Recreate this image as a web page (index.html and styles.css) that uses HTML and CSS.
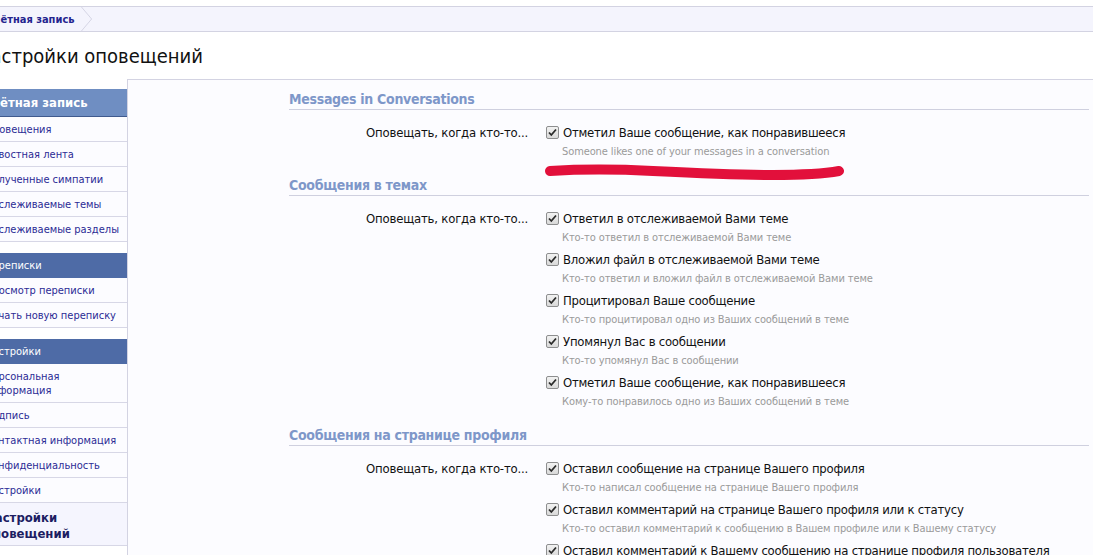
FILE: index.html
```html
<!DOCTYPE html>
<html lang="ru">
<head>
<meta charset="utf-8">
<title>Настройки оповещений</title>
<link rel="stylesheet" href="styles.css">
</head>
<body>
<div class="page">
  <nav class="breadcrumb">
    <a class="crumb" href="#">Учётная запись</a>
    <svg class="chev" width="14" height="26" viewBox="0 0 14 26"><path d="M1 0 L12 13 L1 26" fill="none" stroke="#d3d3e3" stroke-width="1"/></svg>
  </nav>
  <h1 class="title">Настройки оповещений</h1>
  <div class="layout">
    <aside class="sidebar">
      <div class="group">
        <div class="ghead ghead-first">Учётная запись</div>
        <a class="item" href="#">Оповещения</a>
        <a class="item" href="#">Новостная лента</a>
        <a class="item" href="#">Полученные симпатии</a>
        <a class="item" href="#">Отслеживаемые темы</a>
        <a class="item" href="#">Отслеживаемые разделы</a>
      </div>
      <div class="group">
        <div class="ghead">Переписки</div>
        <a class="item" href="#">Просмотр переписки</a>
        <a class="item" href="#">Начать новую переписку</a>
      </div>
      <div class="group">
        <div class="ghead">Настройки</div>
        <a class="item" href="#">Персональная<br>информация</a>
        <a class="item" href="#">Подпись</a>
        <a class="item" href="#">Контактная информация</a>
        <a class="item" href="#">Конфиденциальность</a>
        <a class="item" href="#">Настройки</a>
        <a class="item item-active" href="#">Настройки<br>оповещений</a>
      </div>
    </aside>
    <main class="main">
      <section class="section">
        <h3 class="shead">Messages in Conversations</h3>
        <div class="row">
          <div class="rlabel">Оповещать, когда кто-то...</div>
          <ul class="opts">
            <li class="opt"><div class="oline"><span class="cb"><svg width="11" height="11" viewBox="0 0 11 11"><path d="M2 5.5 L4.3 8 L9 2.5" fill="none" stroke="#2a2a2a" stroke-width="1.8"/></svg></span>Отметил Ваше сообщение, как понравившееся</div><div class="hint">Someone likes one of your messages in a conversation</div></li>
          </ul>
        </div>
        <svg class="scribble" width="310" height="20" viewBox="0 0 310 20"><path d="M7 8 C40 6 70 6 110 8 C150 10 190 12 230 12 C260 12 285 10 296 8" fill="none" stroke="#e2103b" stroke-width="10" stroke-linecap="round"/></svg>
      </section>
      <section class="section">
        <h3 class="shead">Сообщения в темах</h3>
        <div class="row">
          <div class="rlabel">Оповещать, когда кто-то...</div>
          <ul class="opts">
            <li class="opt"><div class="oline"><span class="cb"><svg width="11" height="11" viewBox="0 0 11 11"><path d="M2 5.5 L4.3 8 L9 2.5" fill="none" stroke="#2a2a2a" stroke-width="1.8"/></svg></span>Ответил в отслеживаемой Вами теме</div><div class="hint">Кто-то ответил в отслеживаемой Вами теме</div></li>
            <li class="opt"><div class="oline"><span class="cb"><svg width="11" height="11" viewBox="0 0 11 11"><path d="M2 5.5 L4.3 8 L9 2.5" fill="none" stroke="#2a2a2a" stroke-width="1.8"/></svg></span>Вложил файл в отслеживаемой Вами теме</div><div class="hint">Кто-то ответил и вложил файл в отслеживаемой Вами теме</div></li>
            <li class="opt"><div class="oline"><span class="cb"><svg width="11" height="11" viewBox="0 0 11 11"><path d="M2 5.5 L4.3 8 L9 2.5" fill="none" stroke="#2a2a2a" stroke-width="1.8"/></svg></span>Процитировал Ваше сообщение</div><div class="hint">Кто-то процитировал одно из Ваших сообщений в теме</div></li>
            <li class="opt"><div class="oline"><span class="cb"><svg width="11" height="11" viewBox="0 0 11 11"><path d="M2 5.5 L4.3 8 L9 2.5" fill="none" stroke="#2a2a2a" stroke-width="1.8"/></svg></span>Упомянул Вас в сообщении</div><div class="hint">Кто-то упомянул Вас в сообщении</div></li>
            <li class="opt"><div class="oline"><span class="cb"><svg width="11" height="11" viewBox="0 0 11 11"><path d="M2 5.5 L4.3 8 L9 2.5" fill="none" stroke="#2a2a2a" stroke-width="1.8"/></svg></span>Отметил Ваше сообщение, как понравившееся</div><div class="hint">Кому-то понравилось одно из Ваших сообщений в теме</div></li>
          </ul>
        </div>
      </section>
      <section class="section">
        <h3 class="shead">Сообщения на странице профиля</h3>
        <div class="row">
          <div class="rlabel">Оповещать, когда кто-то...</div>
          <ul class="opts">
            <li class="opt"><div class="oline"><span class="cb"><svg width="11" height="11" viewBox="0 0 11 11"><path d="M2 5.5 L4.3 8 L9 2.5" fill="none" stroke="#2a2a2a" stroke-width="1.8"/></svg></span>Оставил сообщение на странице Вашего профиля</div><div class="hint">Кто-то написал сообщение на странице Вашего профиля</div></li>
            <li class="opt"><div class="oline"><span class="cb"><svg width="11" height="11" viewBox="0 0 11 11"><path d="M2 5.5 L4.3 8 L9 2.5" fill="none" stroke="#2a2a2a" stroke-width="1.8"/></svg></span>Оставил комментарий на странице Вашего профиля или к статусу</div><div class="hint">Кто-то оставил комментарий к сообщению в Вашем профиле или к Вашему статусу</div></li>
            <li class="opt"><div class="oline"><span class="cb"><svg width="11" height="11" viewBox="0 0 11 11"><path d="M2 5.5 L4.3 8 L9 2.5" fill="none" stroke="#2a2a2a" stroke-width="1.8"/></svg></span>Оставил комментарий к Вашему сообщению на странице профиля пользователя</div><div class="hint">Кто-то оставил комментарий к Вашему сообщению на странице профиля</div></li>
          </ul>
        </div>
      </section>
    </main>
  </div>
</div>
</body>
</html>
```

FILE: styles.css
```css
html, body {
  margin: 0;
  padding: 0;
  background: #ffffff;
  overflow: hidden;
  height: 555px;
}
body {
  font-family: "DejaVu Sans Condensed", "DejaVu Sans", "Liberation Sans", sans-serif;
  color: #000;
}
.page {
  margin-left: -25px;
  width: 1118px;
}
.breadcrumb {
  margin-top: 6px;
  height: 24px;
  border-top: 1px solid #d3d3e2;
  border-bottom: 1px solid #d3d3e2;
  background: #f4f4fd;
  display: flex;
  align-items: center;
}
.crumb {
  padding-left: 11px;
  font-size: 11px;
  font-weight: bold;
  color: #24248f;
  text-decoration: none;
}
.chev {
  margin-left: 5px;
  display: block;
  align-self: stretch;
  height: 24px;
}
.title {
  margin: 0;
  padding-left: 2px;
  font-size: 20px;
  font-weight: normal;
  line-height: 24px;
  margin-top: 12px;
  color: #111;
}
.layout {
  display: flex;
  margin-top: 11px;
  align-items: flex-start;
}
.sidebar {
  width: 152px;
  flex: none;
  margin-top: 10px;
  display: flex;
  flex-direction: column;
  gap: 11px;
}
.group {
  display: flex;
  flex-direction: column;
}
.ghead {
  background: #4e6ba6;
  color: #fff;
  font-size: 11px;
  line-height: 25px;
  height: 25px;
  padding-left: 10px;
}
.ghead-first {
  background: #6f8ec2;
  font-size: 13px;
  font-weight: bold;
  line-height: 28px;
  height: 27px;
  padding-left: 8px;
  border-bottom: 1px solid #405a8e;
}
.item {
  display: block;
  font-size: 11px;
  line-height: 14px;
  padding: 6px 0 4px 10px;
  color: #2b2b95;
  text-decoration: none;
  background: #fcfcff;
  border-bottom: 1px solid #d7d7e6;
}
.item-active {
  font-size: 13px;
  font-weight: bold;
  line-height: 16px;
  color: #1d1d62;
  background: #f5f5fe;
  padding-top: 7px;
  padding-bottom: 3px;
}
.main {
  flex: 1;
  border-top: 1px solid #d3d3e2;
  border-left: 1px solid #d3d3e2;
  background: #fcfcff;
  padding: 9px 4px 0 161px;
  min-height: 600px;
}
.section {
  position: relative;
}
.section + .section {
  margin-top: 10px;
}
.shead {
  margin: 0;
  font-size: 14px;
  letter-spacing: -0.3px;
  font-weight: bold;
  line-height: 20px;
  color: #7e97c9;
  border-bottom: 1px solid #cfd0df;
  margin-bottom: 14px;
}
.row {
  display: flex;
  gap: 18px;
}
.rlabel {
  width: 239px;
  flex: none;
  text-align: right;
  font-size: 13px;
  letter-spacing: -0.2px;
  line-height: 18px;
  color: #111;
}
.opts {
  list-style: none;
  margin: 0;
  padding: 0;
}
.opt {
  margin-bottom: 4px;
}
.oline {
  display: flex;
  align-items: center;
  font-size: 13px;
  letter-spacing: -0.25px;
  line-height: 18px;
  color: #111;
  white-space: nowrap;
}
.cb {
  width: 11px;
  height: 11px;
  border: 1px solid #8d8e8f;
  border-radius: 2px;
  background: linear-gradient(#f2f2f2, #d9d9d9);
  margin-right: 4px;
  display: flex;
  align-items: center;
  justify-content: center;
  flex: none;
  position: relative;
  top: -1px;
}
.cb svg {
  display: block;
}
.hint {
  padding-left: 16px;
  padding-top: 1px;
  font-size: 11px;
  letter-spacing: -0.1px;
  line-height: 18px;
  color: #9a9a9a;
  white-space: nowrap;
}
.scribble {
  position: absolute;
  left: 254px;
  top: 74px;
}
```
